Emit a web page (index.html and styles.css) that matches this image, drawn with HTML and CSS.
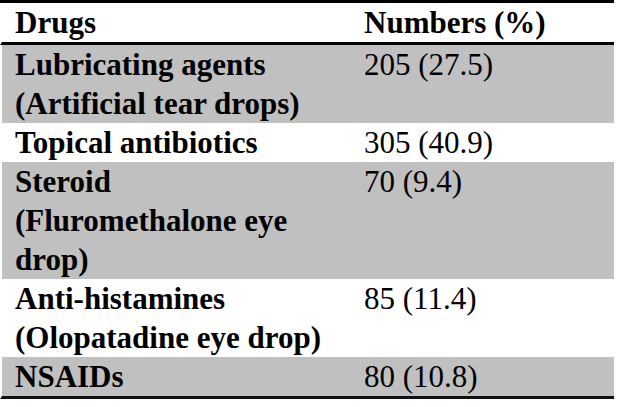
FILE: index.html
```html
<!DOCTYPE html>
<html lang="en">
<head>
<meta charset="utf-8">
<title>Drugs table</title>
<link rel="stylesheet" href="styles.css">
</head>
<body>
<table class="drug-table">
  <thead>
    <tr>
      <th class="col-drug">Drugs</th>
      <th class="col-num">Numbers (%)</th>
    </tr>
  </thead>
  <tbody>
    <tr class="shaded">
      <td class="col-drug">Lubricating agents<br>(Artificial tear drops)</td>
      <td class="col-num">205 (27.5)</td>
    </tr>
    <tr>
      <td class="col-drug">Topical antibiotics</td>
      <td class="col-num">305 (40.9)</td>
    </tr>
    <tr class="shaded">
      <td class="col-drug">Steroid<br>(Fluromethalone eye<br>drop)</td>
      <td class="col-num">70 (9.4)</td>
    </tr>
    <tr>
      <td class="col-drug">Anti-histamines<br>(Olopatadine eye drop)</td>
      <td class="col-num">85 (11.4)</td>
    </tr>
    <tr class="shaded last">
      <td class="col-drug">NSAIDs</td>
      <td class="col-num">80 (10.8)</td>
    </tr>
  </tbody>
</table>
</body>
</html>
```

FILE: styles.css
```css
html, body {
  margin: 0;
  padding: 0;
  background: #fff;
}

.drug-table {
  width: 614px;
  border-collapse: separate;
  border-spacing: 0;
  border-top: 3px solid #000;
  font-family: "Liberation Serif", "Times New Roman", serif;
  font-size: 31px;
  line-height: 39px;
  color: #000;
}

.drug-table th,
.drug-table td {
  padding: 0;
  text-align: left;
  vertical-align: top;
  white-space: nowrap;
}

.drug-table th {
  font-weight: bold;
  border-bottom: 3px solid #000;
}

.drug-table .col-drug {
  width: 349px;
  padding-left: 13px;
  border-left: 2px solid #fff;
  font-weight: bold;
}

.drug-table td.col-num {
  font-weight: normal;
}

.drug-table tr.shaded td {
  background: #c0c0c0;
}

.drug-table tr.last td {
  border-bottom: 3px solid #111;
}
```
